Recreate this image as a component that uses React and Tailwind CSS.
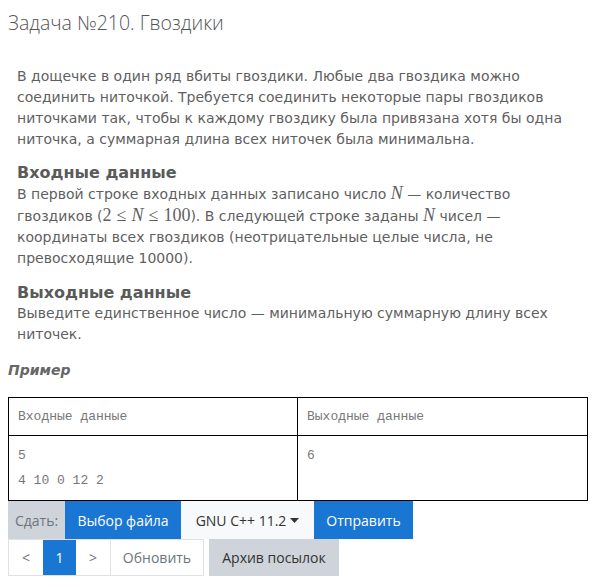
import React from 'react';

const body = { fontFamily: '"DejaVu Sans", Verdana, sans-serif' };
const ui = { fontFamily: '"Open Sans", "Noto Sans", sans-serif' };
const serif = { fontFamily: '"Liberation Serif", "DejaVu Serif", serif' };

function M({ children }) {
  return (
    <span className="text-[18px] italic" style={serif}>
      {children}
    </span>
  );
}

function R({ children }) {
  return (
    <span className="text-[18px]" style={serif}>
      {children}
    </span>
  );
}

export default function App() {
  return (
    <div className="w-[607px] min-h-[587px] bg-white text-[#5f5f5f]">
      <h1 className="px-2 pt-[9px] text-[19.5px] font-light text-[#555] leading-[28px]" style={ui}>
        Задача №210. Гвоздики
      </h1>

      <div className="px-[17px] pt-[29px] text-[14px] leading-[21px]" style={body}>
        <p>
          В дощечке в один ряд вбиты гвоздики. Любые два гвоздика можно соединить ниточкой. Требуется
          соединить некоторые пары гвоздиков ниточками так, чтобы к каждому гвоздику была привязана хотя бы
          одна ниточка, а суммарная длина всех ниточек была минимальна.
        </p>

        <h2 className="mt-[12px] text-[16px] font-bold leading-[21px] text-[#5a5a5a]">Входные данные</h2>
        <p>
          В первой строке входных данных записано число <M>N</M> — количество гвоздиков (
          <R>2</R>
          <R><span className="mx-[5px]">≤</span></R>
          <M>N</M>
          <R><span className="mx-[5px]">≤</span>100</R>). В следующей строке заданы <M>N</M> чисел — координаты всех гвоздиков
          (неотрицательные целые числа, не превосходящие 10000).
        </p>

        <h2 className="mt-[13px] text-[16px] font-bold leading-[21px] text-[#5a5a5a]">Выходные данные</h2>
        <p>Выведите единственное число — минимальную суммарную длину всех ниточек.</p>
      </div>

      <div className="px-2 pt-[15px] text-[14px] font-bold italic text-[#666]" style={body}>
        Пример
      </div>

      <div className="px-2 pt-[16px]">
        <div
          className="grid w-[580px] grid-cols-[289px_1fr] border border-black text-[13px] text-[#777]"
          style={{ fontFamily: '"Liberation Mono", "Courier New", monospace' }}
        >
          <div className="flex h-[38px] items-center border-r border-b border-black px-[9px]">Входные данные</div>
          <div className="flex h-[38px] items-center border-b border-black px-[9px]">Выходные данные</div>
          <div className="h-[64px] border-r border-black px-[9px] pt-[7px] leading-[25px]">
            <div>5</div>
            <div>4 10 0 12 2</div>
          </div>
          <div className="h-[64px] px-[9px] pt-[7px] leading-[25px]">6</div>
        </div>
      </div>

      <div className="px-2 text-[14px]" style={ui}>
        <div className="flex h-[38px]">
          <div className="flex w-[57px] items-center justify-center bg-[#ced4da] text-[#6c757d]">Сдать:</div>
          <div className="flex w-[116px] items-center justify-center bg-[#1976d2] text-white">Выбор файла</div>
          <div className="flex w-[133px] items-center justify-center bg-[#f8f9fa] text-[#333]">
            GNU C++ 11.2
            <svg width="9" height="5" viewBox="0 0 9 5" className="ml-[4px]">
              <path d="M0 0h9L4.5 5z" fill="#333" />
            </svg>
          </div>
          <div className="flex w-[99px] items-center justify-center bg-[#1976d2] text-white">Отправить</div>
        </div>
        <div className="flex h-[37px]">
          <div className="flex border border-[#dee2e6] bg-white">
            <div className="flex w-[34px] items-center justify-center text-[#6c757d]">&lt;</div>
            <div className="flex w-[33px] items-center justify-center bg-[#1976d2] text-white">1</div>
            <div className="flex w-[35px] items-center justify-center border-r border-[#dee2e6] text-[#6c757d]">&gt;</div>
            <div className="flex w-[92px] items-center justify-center text-[#6c757d]">Обновить</div>
          </div>
          <div className="ml-[5px] flex w-[130px] items-center justify-center bg-[#ced4da] text-[#333]">Архив посылок</div>
        </div>
      </div>
    </div>
  );
}
